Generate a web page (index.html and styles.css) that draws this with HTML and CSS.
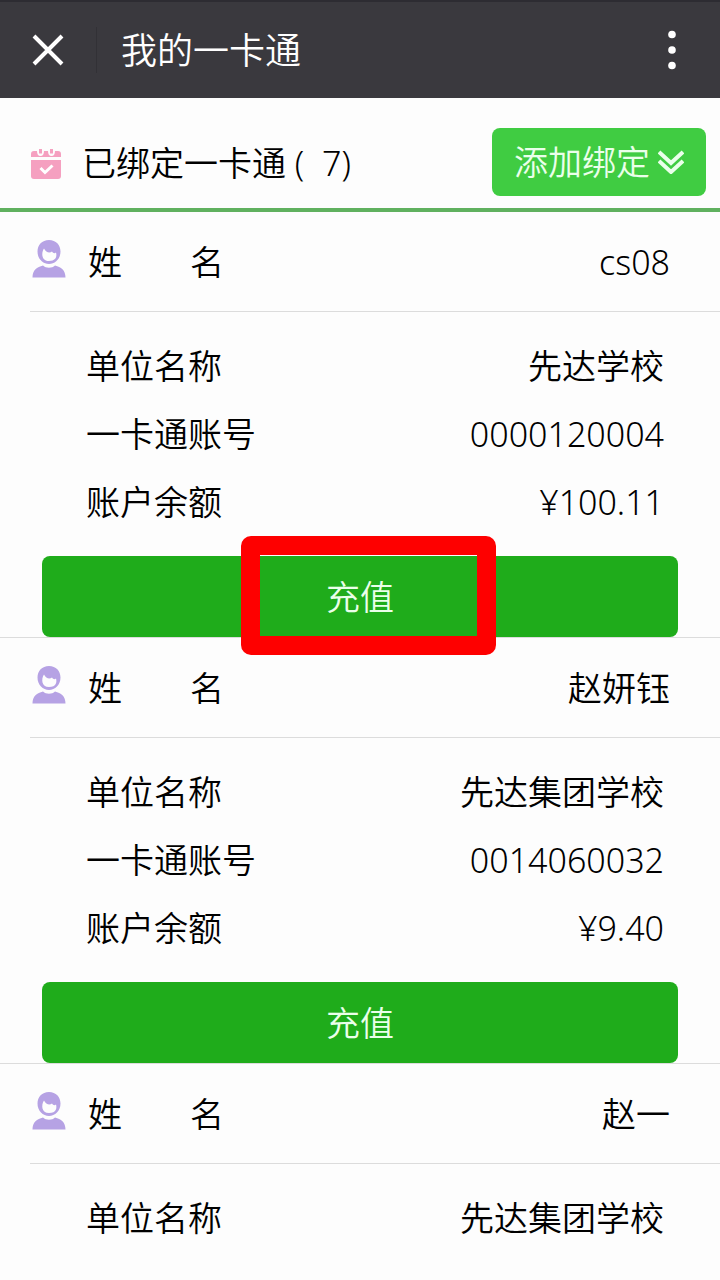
FILE: index.html
```html
<!DOCTYPE html>
<html lang="zh-CN">
<head>
<meta charset="utf-8">
<meta name="viewport" content="width=device-width, initial-scale=1">
<title>我的一卡通</title>
<link rel="stylesheet" href="styles.css">
</head>
<body>
<svg class="sprite" aria-hidden="true">
  <symbol id="person" viewBox="0 0 34 38">
    <path fill-rule="evenodd" d="M17 0C24 0 28.500 5 28.500 11.500C28.500 19 23 24 17 24S5.500 19 5.500 11.500C5.500 5 10 0 17 0ZM12 8.500C9 13 9.500 21 17 21S25 16 24 12.500C22.500 14 21 13 20 11.500C17.500 13.500 14 12.500 12 8.500Z"/>
    <path d="M0.500 37.500C0.500 30 5 27 11 25.500C14 28.500 20 28.500 23 25.500C29 27 33.500 30 33.500 37.500Z"/>
  </symbol>
</svg>
<header class="topbar">
  <button class="icon-button close" aria-label="关闭"><svg width="34" height="34" viewBox="0 0 34 34"><path d="M3 3L31 31M31 3L3 31"/></svg></button>
  <h1 class="title">我的一卡通</h1>
  <button class="icon-button more" aria-label="更多"><svg width="10" height="40" viewBox="0 0 10 40"><circle cx="5" cy="4.500" r="3.800"/><circle cx="5" cy="20" r="3.800"/><circle cx="5" cy="35.500" r="3.800"/></svg></button>
</header>
<main>
  <section class="summary">
    <svg class="calendar" width="32" height="32" viewBox="0 0 32 32">
      <path d="M1 9V6Q1 3 4 3H7Q7 8 10.500 8T14 3H18Q18 8 21.500 8T25 3H28Q31 3 31 6V9Z"/>
      <path d="M10.500 1V5.500M21.500 1V5.500" class="ring"/>
      <path d="M1 12H31V28Q31 31 28 31H4Q1 31 1 28Z"/>
      <path class="tick" d="M10.500 20L15 24.500L22.500 17.500"/>
    </svg>
    <h2 class="bound">已绑定一卡通 ( &nbsp;7)</h2>
    <button class="add">添加绑定<svg width="26" height="24" viewBox="0 0 26 24"><path d="M1 2L13 13L25 2M1 11L13 22L25 11"/></svg></button>
  </section>
  <article class="card">
    <div class="owner"><svg class="person" width="34" height="38"><use href="#person"/></svg><span>姓　　名</span><span class="value">cs08</span></div>
    <dl class="details">
      <div class="row"><dt>单位名称</dt><dd>先达学校</dd></div>
      <div class="row"><dt>一卡通账号</dt><dd>0000120004</dd></div>
      <div class="row"><dt>账户余额</dt><dd>¥100.11</dd></div>
    </dl>
    <div class="action"><button class="recharge">充值</button><span class="highlight"></span></div>
  </article>
  <article class="card">
    <div class="owner"><svg class="person" width="34" height="38"><use href="#person"/></svg><span>姓　　名</span><span class="value">赵妍钰</span></div>
    <dl class="details">
      <div class="row"><dt>单位名称</dt><dd>先达集团学校</dd></div>
      <div class="row"><dt>一卡通账号</dt><dd>0014060032</dd></div>
      <div class="row"><dt>账户余额</dt><dd>¥9.40</dd></div>
    </dl>
    <div class="action"><button class="recharge">充值</button></div>
  </article>
  <article class="card last">
    <div class="owner"><svg class="person" width="34" height="38"><use href="#person"/></svg><span>姓　　名</span><span class="value">赵一</span></div>
    <dl class="details">
      <div class="row"><dt>单位名称</dt><dd>先达集团学校</dd></div>
    </dl>
  </article>
</main>
</body>
</html>
```
FILE: styles.css
```css
* { box-sizing: border-box; }
body {
  margin: 0;
  background: #fdfdfd;
  color: #000;
  font: 350 34px/48px "Noto Sans", "Noto Sans CJK SC", sans-serif;
}
button { font: inherit; border: 0; cursor: pointer; }
h1, h2, dl, dd { margin: 0; font-weight: inherit; }
.sprite { display: none; }
.topbar {
  display: flex;
  align-items: center;
  height: 98px;
  padding: 0 28px 0 0;
  border-top: 2px solid #2d2c32;
  background: #3a393e;
  color: #fff;
}
.icon-button { display: flex; justify-content: center; align-items: center; padding: 0; background: none; }
.close { width: 97px; height: 46px; border-right: 1px solid #323136; }
.close path { fill: none; stroke: #fff; stroke-width: 4; }
.title { flex: 1; padding: 2px 0 0 24px; font-size: 36px; }
.more { width: 40px; height: 46px; }
.more circle { fill: #fff; }
.summary {
  display: flex;
  align-items: center;
  height: 114px;
  padding: 18px 14px 0 30px;
  border-bottom: 4px solid #60b15f;
}
.calendar { margin-top: 4px; fill: #f5a0c0; }
.ring { stroke: #f5a0c0; stroke-width: 3; }
.tick { fill: none; stroke: #fff; stroke-width: 3; }
.bound { flex: 1; padding: 2px 0 0 20px; font-size: 34px; }
.add {
  display: flex;
  align-items: center;
  justify-content: center;
  gap: 8px;
  width: 214px;
  height: 68px;
  padding: 0;
  border-radius: 8px;
  background: #40cc42;
  color: #eaffea;
}
.add path { fill: none; stroke: #eaffea; stroke-width: 4; }
.card { border-bottom: 1px solid #dcdcdc; }
.card.last { border: 0; }
.owner {
  display: flex;
  align-items: center;
  height: 100px;
  margin-left: 30px;
  padding-right: 50px;
  border-bottom: 1px solid #dcdcdc;
}
.person { margin: 0 22px 6px 2px; fill: #b6a2e4; }
.value { margin-left: auto; }
.details { padding: 20px 56px 0 86px; }
.row { display: flex; align-items: center; justify-content: space-between; height: 68px; }
.action { position: relative; padding: 20px 42px 0; }
.recharge {
  display: block;
  width: 100%;
  height: 81px;
  border-radius: 8px;
  background: #1fac1b;
  color: #eaffea;
}
.highlight {
  position: absolute;
  top: 0;
  left: 241px;
  width: 255px;
  height: 119px;
  border: 19px solid #fe0000;
  border-radius: 10px;
  pointer-events: none;
}
```
